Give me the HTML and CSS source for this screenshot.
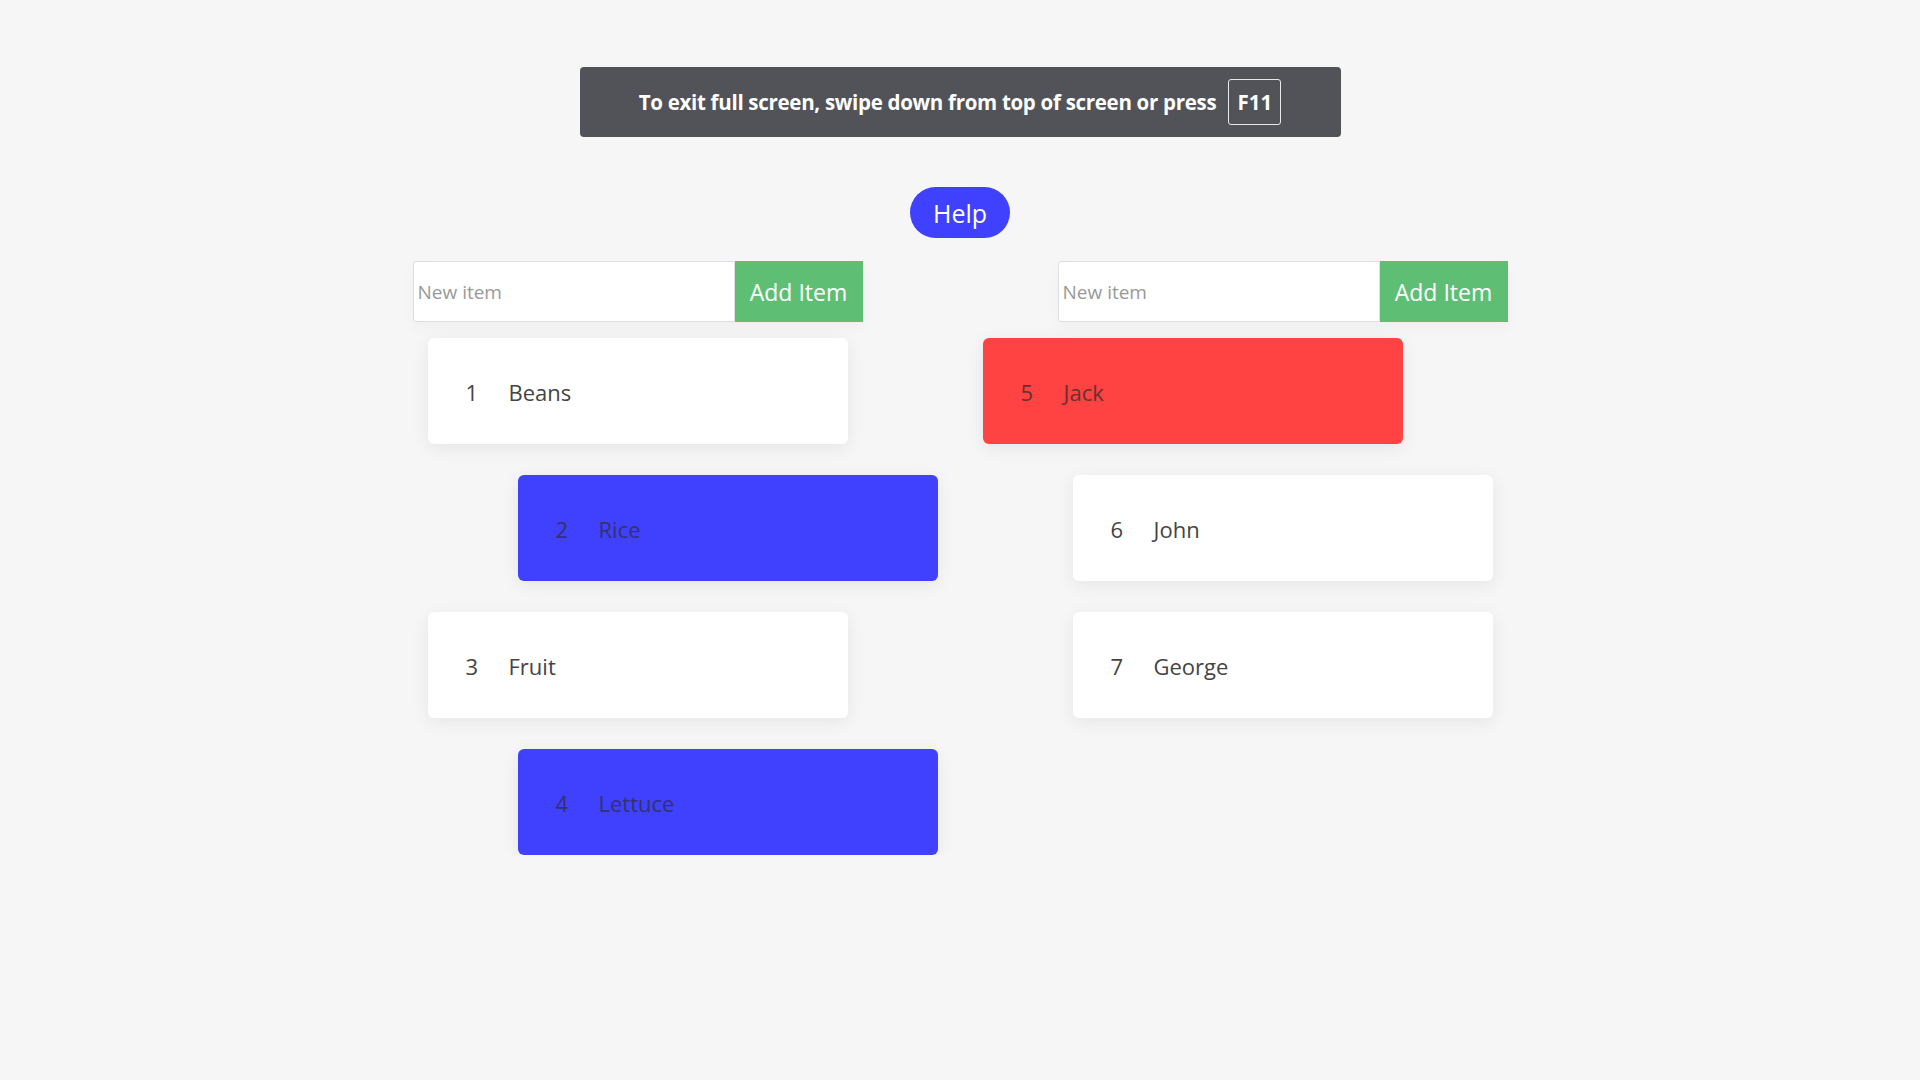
FILE: index.html
```html
<!DOCTYPE html>
<html lang="en">
<head>
<meta charset="utf-8">
<title>Lists</title>
<link rel="stylesheet" href="styles.css">
</head>
<body>
<div class="page">
  <div class="banner">
    <span class="banner-text">To exit full screen, swipe down from top of screen or press</span>
    <span class="key">F11</span>
  </div>
  <button class="help">Help</button>
  <div class="columns">
    <div class="column">
      <form class="add-form">
        <input class="add-input" type="text" placeholder="New item">
        <button class="add-btn" type="button">Add Item</button>
      </form>
      <ul class="list">
        <li class="card"><span class="num">1</span><span class="name">Beans</span></li>
        <li class="card card-blue"><span class="num">2</span><span class="name">Rice</span></li>
        <li class="card"><span class="num">3</span><span class="name">Fruit</span></li>
        <li class="card card-blue"><span class="num">4</span><span class="name">Lettuce</span></li>
      </ul>
    </div>
    <div class="column">
      <form class="add-form">
        <input class="add-input" type="text" placeholder="New item">
        <button class="add-btn" type="button">Add Item</button>
      </form>
      <ul class="list list-right">
        <li class="card card-red"><span class="num">5</span><span class="name">Jack</span></li>
        <li class="card"><span class="num">6</span><span class="name">John</span></li>
        <li class="card"><span class="num">7</span><span class="name">George</span></li>
      </ul>
    </div>
  </div>
</div>
</body>
</html>
```

FILE: styles.css
```css
* { box-sizing: border-box; }
html, body {
  margin: 0;
  padding: 0;
  background: #f6f6f6;
  font-family: "Open Sans", "Noto Sans", sans-serif;
  color: #444;
}
.page {
  display: flex;
  flex-direction: column;
  align-items: center;
  padding-top: 67px;
}
.banner {
  width: 761px;
  height: 70px;
  background: #515358;
  border-radius: 4px;
  display: flex;
  align-items: center;
  justify-content: center;
  gap: 12px;
  color: #fff;
  font-weight: 700;
}
.banner-text {
  font-size: 20.5px;
  letter-spacing: -0.3px;
}
.key {
  width: 53px;
  height: 46px;
  border: 1px solid #e8e8e8;
  border-radius: 3px;
  display: flex;
  align-items: center;
  justify-content: center;
  font-size: 20.5px;
}
.help {
  margin-top: 50px;
  width: 100px;
  height: 51px;
  border: none;
  border-radius: 26px;
  background: #4040ff;
  color: #fff;
  font-family: "Open Sans", "Noto Sans", sans-serif;
  font-size: 25px;
  padding: 1px 0 0;
}
.columns {
  margin-top: 23px;
  display: flex;
  gap: 195px;
}
.column {
  width: 450px;
  display: flex;
  flex-direction: column;
}
.add-form {
  display: flex;
  height: 61px;
  margin: 0;
  box-shadow: 0 6px 14px rgba(0,0,0,0.03);
}
.add-input {
  width: 322px;
  height: 61px;
  border: 1px solid #dcdfe3;
  border-radius: 3px 0 0 3px;
  background: #fff;
  padding: 0 4px;
  font-family: "Open Sans", "Noto Sans", sans-serif;
  font-size: 19px;
  color: #444;
  outline: none;
}
.add-input::placeholder { color: #999; }
.add-btn {
  width: 128px;
  height: 61px;
  border: none;
  background: #5ebf74;
  color: #fff;
  font-family: "Open Sans", "Noto Sans", sans-serif;
  font-size: 23px;
  padding: 1px 0 0;
}
.list {
  list-style: none;
  margin: 16px 0 0;
  padding: 0;
  display: flex;
  flex-direction: column;
  gap: 31px;
}
.card {
  width: 420px;
  height: 106px;
  margin-left: 15px;
  background: #fff;
  border-radius: 6px;
  box-shadow: 0 4px 18px rgba(0,0,0,0.07);
  display: flex;
  align-items: center;
  padding-left: 38px;
  padding-top: 2px;
  font-size: 22px;
  color: #444;
}
.list .card-blue { background: #4040ff; margin-left: 105px; color: #33336a; }
.list .card-red { background: #ff4242; margin-left: -75px; color: #6a3030; }
.num {
  width: 43px;
}
```
